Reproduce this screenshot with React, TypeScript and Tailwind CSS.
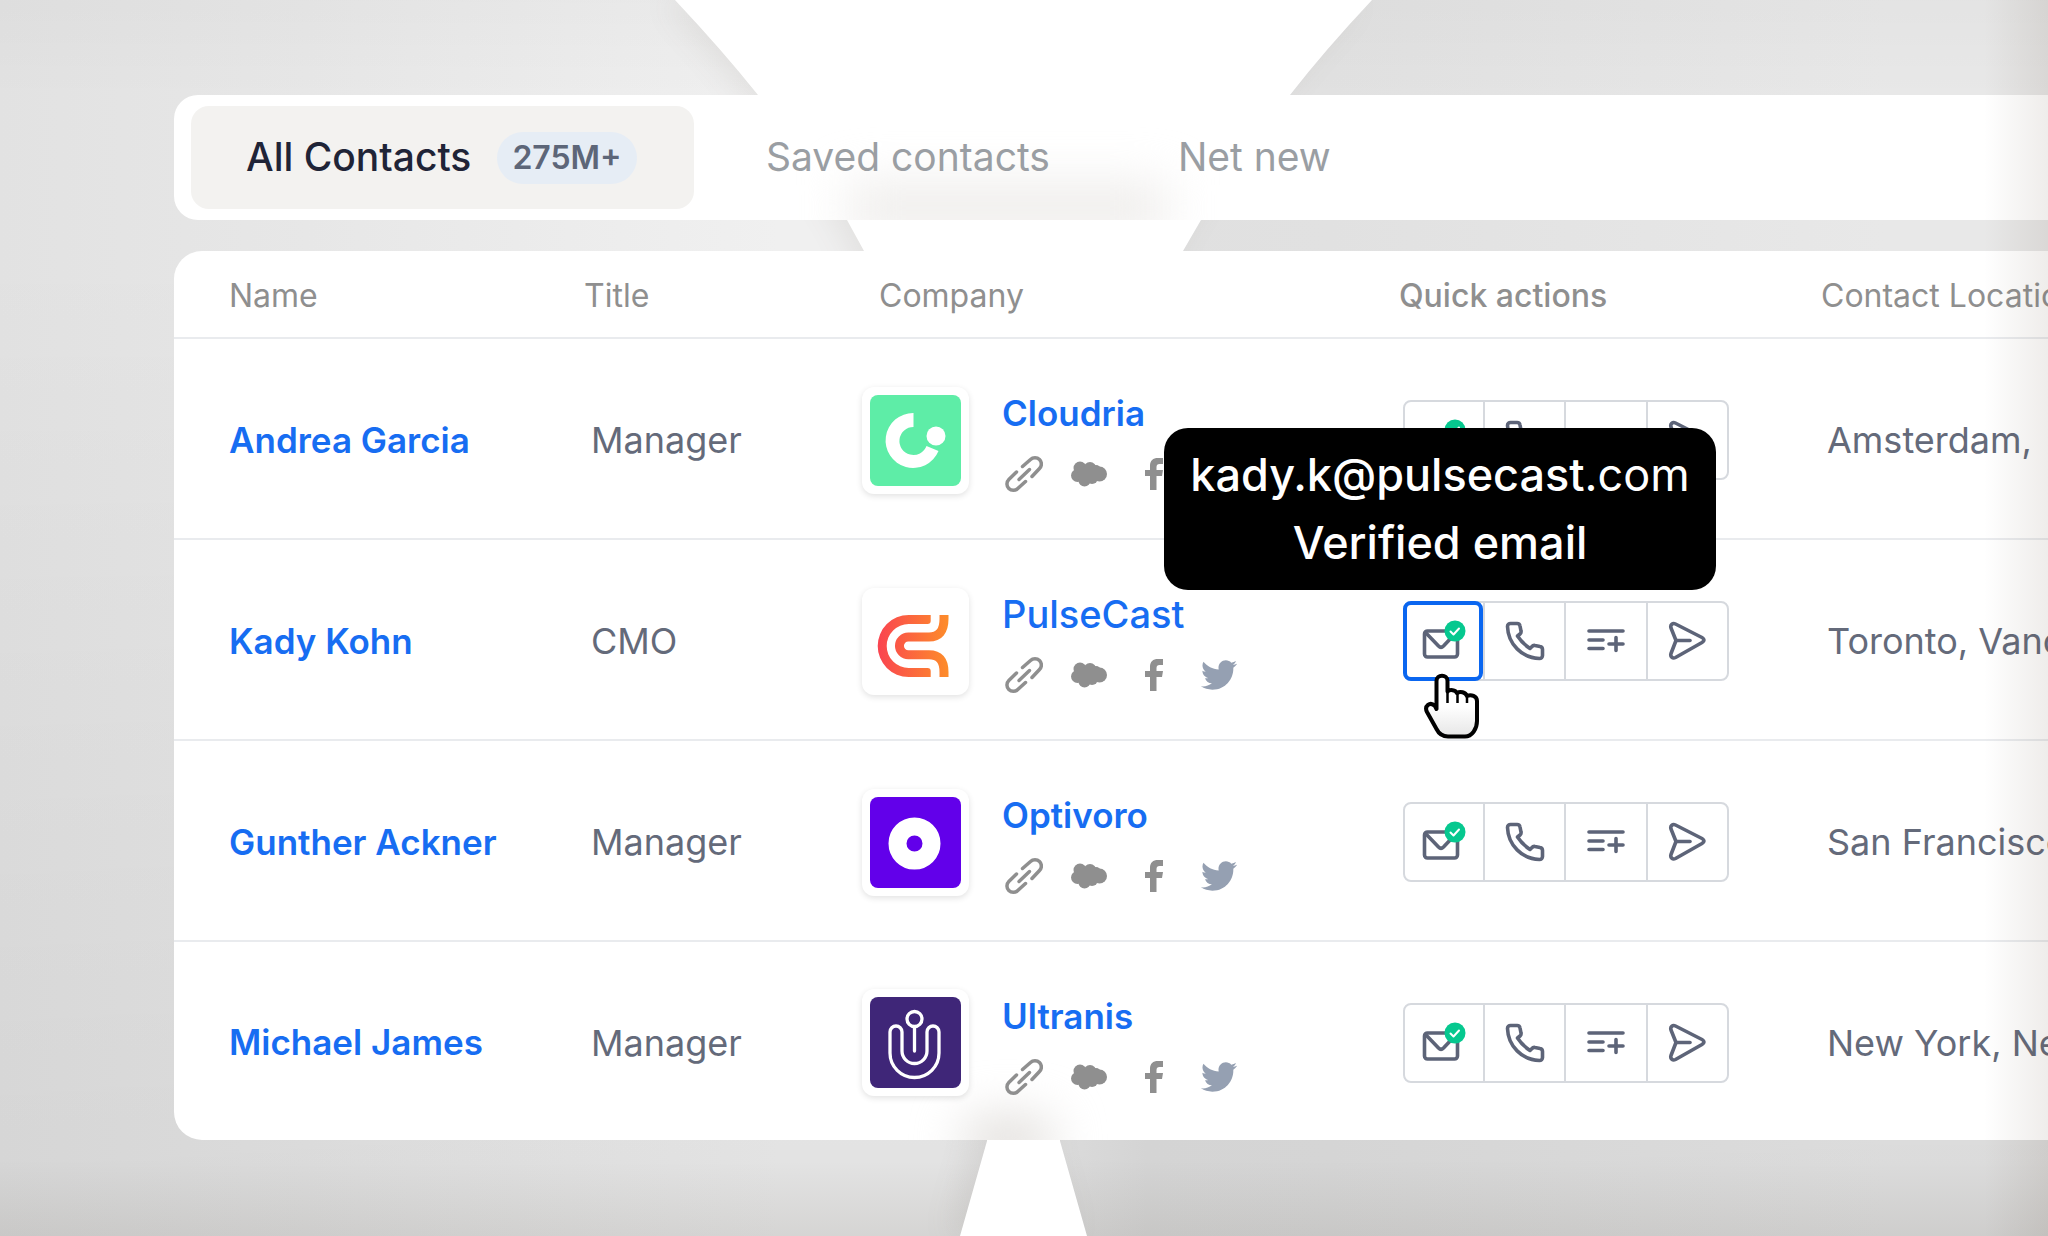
import type { ReactNode } from 'react';

type Contact = {
  name: string;
  title: string;
  company: string;
  location: string;
  logo: ReactNode;
  active?: boolean;
};

function CloudriaLogo() {
  return (
    <svg viewBox="0 0 91 91" className="size-[91px] rounded-lg bg-[#5eeda7]" aria-hidden="true">
      <path d="M43.500 18A27.500 27.500 0 1 0 68.500 56L56.500 51A14 14 0 1 1 43.500 32Z" fill="#fff" />
      <circle cx="66" cy="41" r="9.500" fill="#fff" />
    </svg>
  );
}

function PulseCastLogo() {
  return (
    <svg viewBox="0 0 91 91" className="size-[91px]" aria-hidden="true">
      <defs>
        <linearGradient id="pulse" gradientUnits="userSpaceOnUse" x1="8" y1="50" x2="79" y2="50">
          <stop offset="0" stopColor="#fa4450" />
          <stop offset="1" stopColor="#fd8d2a" />
        </linearGradient>
      </defs>
      <path
        d="M60.700 19H38.700A31 31 0 0 0 38.700 81H60.700V75Q60.700 72 57.500 72H38.700A22 22 0 0 1 38.700 28H57.500Q60.700 28 60.700 25Z"
        fill="url(#pulse)"
      />
      <path
        d="M74 19V23Q74 41 59 41H38.300A8.850 8.850 0 0 0 38.300 58.700H59Q74 58.700 74 76V81"
        fill="none" stroke="url(#pulse)" strokeWidth="9"
      />
    </svg>
  );
}

function OptivoroLogo() {
  return (
    <svg viewBox="0 0 91 91" className="size-[91px] rounded-lg bg-[#6200ea]" aria-hidden="true">
      <circle cx="44.500" cy="46.500" r="17" fill="none" stroke="#fff" strokeWidth="18" />
    </svg>
  );
}

function UltranisLogo() {
  return (
    <svg viewBox="0 0 91 91" className="size-[91px] rounded-lg bg-[#3f2678]" aria-hidden="true">
      <g fill="none" stroke="#fff" strokeWidth="3.300" strokeLinecap="round">
        <circle cx="44.500" cy="22" r="7.500" />
        <path d="M44.500 30V54" />
        <path d="M20 35a6 6 0 0 1 12 0v19a12.500 12.500 0 0 0 25 0V35a6 6 0 0 1 12 0v21a24.500 24.500 0 0 1-49 0Z" />
      </g>
    </svg>
  );
}

function LinkIcon() {
  return (
    <svg viewBox="0 0 38 38" className="size-[38px]" fill="none" stroke="currentColor" strokeWidth="3.500" strokeLinecap="round" aria-hidden="true">
      <path d="M17.500 11.500L25.500 4.500A6.200 6.200 0 0 1 34.500 13.500L27 21.500" />
      <path d="M11.500 17L3.800 24.500A6.200 6.200 0 0 0 12.800 33.500L20.500 26.500" />
      <path d="M14 24.500L24.500 14.500" />
    </svg>
  );
}

function SalesforceIcon() {
  return (
    <svg viewBox="0 0 36 26" className="h-[26px] w-9" fill="currentColor" aria-hidden="true">
      <circle cx="9" cy="7" r="6.500" />
      <circle cx="19" cy="7.500" r="6.500" />
      <circle cx="6.500" cy="14.500" r="6.500" />
      <circle cx="13.500" cy="19.500" r="6" />
      <circle cx="21" cy="17" r="6" />
      <circle cx="25" cy="9" r="5" />
      <circle cx="28.500" cy="13" r="7.500" />
      <path d="M6 6H27V20H8Z" />
    </svg>
  );
}

function FacebookIcon() {
  return (
    <svg viewBox="0 0 20 34" className="h-[34px] w-5" fill="currentColor" aria-hidden="true">
      <path d="M6 33V19H1V13H6V9C6 3.500 9 1 14 1H19V7H15.500C13.500 7 12.500 8 12.500 10V13H19L18 19H12.500V33Z" />
    </svg>
  );
}

function TwitterIcon() {
  return (
    <svg viewBox="0 0 24 24" className="size-9" fill="currentColor" aria-hidden="true">
      <path d="M23.954 4.569c-.885.389-1.830.654-2.825.775 1.014-.611 1.794-1.574 2.163-2.723-.951.555-2.005.959-3.127 1.184-.896-.959-2.173-1.559-3.591-1.559-2.717 0-4.920 2.203-4.920 4.917 0 .390.045.765.127 1.124C7.691 8.094 4.066 6.130 1.640 3.161c-.427.722-.666 1.561-.666 2.475 0 1.710.870 3.213 2.188 4.096-.807-.026-1.566-.248-2.228-.616v.061c0 2.385 1.693 4.374 3.946 4.827-.413.111-.849.171-1.296.171-.314 0-.615-.030-.916-.086.631 1.953 2.445 3.377 4.604 3.417-1.680 1.319-3.809 2.105-6.102 2.105-.390 0-.779-.023-1.170-.067 2.189 1.394 4.768 2.209 7.557 2.209 9.054 0 13.999-7.496 13.999-13.986 0-.209 0-.420-.015-.630.961-.689 1.800-1.560 2.460-2.548z" />
    </svg>
  );
}

const iconStroke = {
  fill: 'none',
  stroke: 'currentColor',
  strokeWidth: 3.6,
  strokeLinecap: 'round' as const,
  strokeLinejoin: 'round' as const,
  'aria-hidden': true,
};

function MailIcon() {
  return (
    <svg viewBox="0 0 50 44" className="h-11 w-[50px]" {...iconStroke}>
      <rect x="5.500" y="12" width="33" height="26" rx="3" />
      <path d="M7.500 14.500L19.500 27Q22 29.500 24.500 27L34 17" />
      <circle cx="36" cy="12" r="10.500" fill="#06c88f" stroke="none" />
      <path d="M31.500 12.500L34.500 15.500L40 9.500" stroke="#fff" strokeWidth="2" />
    </svg>
  );
}

function PhoneIcon() {
  return (
    <svg viewBox="0 0 40 40" className="size-10" {...iconStroke}>
      <path d="M5.500 2.500H12A3 3 0 0 1 15 5L16 10A3 3 0 0 1 15 13L12.500 15Q17 22 25 27.500L27 25.500A3 3 0 0 1 30 24.500L35 25.500A3 3 0 0 1 37.500 28.500V34.500A3 3 0 0 1 34.500 37.500C17 37 3 23 2.500 5.500A3 3 0 0 1 5.500 2.500Z" />
    </svg>
  );
}

function ListAddIcon() {
  return (
    <svg viewBox="0 0 40 26" className="h-[26px] w-10" {...iconStroke}>
      <path d="M3 3H37M3 12H17M3 20.500H17M23 16H37M30 9.500V22.500" />
    </svg>
  );
}

function SendIcon() {
  return (
    <svg viewBox="0 0 40 40" className="size-10" {...iconStroke}>
      <path d="M4 7C3 4 5.500 1.500 8.500 3L35 16.500Q39 19 35 21.500L8.500 36.500C5.500 38 3 35.500 4 32.500L9 19.500Z" />
      <path d="M9 19.500H23" />
    </svg>
  );
}

function PointerHand() {
  return (
    <svg viewBox="0 0 56 66" className="h-[66px] w-14" aria-hidden="true">
      <defs>
        <linearGradient id="hand" x1="0" y1="0" x2="0" y2="1">
          <stop offset="0.500" stopColor="#fff" />
          <stop offset="1" stopColor="#e6e6e6" />
        </linearGradient>
      </defs>
      <path
        d="M12.500 36V8C12.500 1 23.500 1 23.500 8V18.500C26 16 31.500 17 33 20C36 18 41.500 19 43 23C47 21 53 23 53 28V48C53 56 48 63.500 41 63.500H24C19 63.500 15 61 12.500 56L3 39C0 33 6 28 11 33Z"
        fill="url(#hand)" stroke="#000" strokeWidth="4" strokeLinejoin="round"
      />
      <path d="M23.500 18V30M33.500 20V30M43 23V30" stroke="#000" strokeWidth="2.500" fill="none" />
    </svg>
  );
}

function Backdrop() {
  const shape =
    'M675 0Q722 50 758 95Q812 160 847 220L864 251Q960 500 1000 1000L987 1141L960 1236H1087L1060 1141Q1060 600 1183 251L1201 220Q1240 150 1290 95Q1325 50 1372 0Z';
  return (
    <div className="absolute inset-0 -z-10 bg-[linear-gradient(90deg,#e2e2e2_0%,#e7e7e7_15%,#f0f0f0_38%,#f0f0f0_46%,#e0e0e0_56%,#e1e1e1_65%,#e8e8e8_92%)]">
      <div className="absolute inset-0 bg-[linear-gradient(180deg,rgba(0,0,0,0.02)_0%,rgba(0,0,0,0)_8%,rgba(0,0,0,0)_20%,rgba(0,0,0,0.055)_94%,rgba(20,15,5,0.12)_100%)]" />
      <svg viewBox="0 0 2048 1236" preserveAspectRatio="none" className="absolute inset-0 size-full" aria-hidden="true">
        <defs>
          <filter id="soft">
            <feGaussianBlur stdDeviation="16" />
          </filter>
        </defs>
        <path d={shape} transform="translate(-12 0)" fill="#5a5045" opacity="0.09" filter="url(#soft)" />
        <path d={shape} fill="#fff" />
      </svg>
    </div>
  );
}

const contacts: Contact[] = [
  { name: 'Andrea Garcia', title: 'Manager', company: 'Cloudria', location: 'Amsterdam,', logo: <CloudriaLogo /> },
  { name: 'Kady Kohn', title: 'CMO', company: 'PulseCast', location: 'Toronto, Vancouver', logo: <PulseCastLogo />, active: true },
  { name: 'Gunther Ackner', title: 'Manager', company: 'Optivoro', location: 'San Francisco', logo: <OptivoroLogo /> },
  { name: 'Michael James', title: 'Manager', company: 'Ultranis', location: 'New York, New York', logo: <UltranisLogo /> },
];

const actions = [
  { label: 'Call', icon: <PhoneIcon /> },
  { label: 'Add to list', icon: <ListAddIcon /> },
  { label: 'Send sequence', icon: <SendIcon /> },
];

function QuickActions({ active }: { active?: boolean }) {
  return (
    <div className="relative w-[326px]">
      <div className="flex h-20 rounded-lg border-2 border-[#d6d9de] text-[#5d6478]">
        <button type="button" aria-label="Email" className="flex w-[78px] items-center justify-center">
          <MailIcon />
        </button>
        {actions.map((a) => (
          <button key={a.label} type="button" aria-label={a.label} className="flex flex-1 items-center justify-center border-l-2 border-[#d6d9de]">
            {a.icon}
          </button>
        ))}
      </div>
      {active && (
        <>
          <div className="pointer-events-none absolute inset-y-0 left-0 w-20 rounded-lg border-4 border-[#0a66f0]" />
          <div role="tooltip" className="absolute bottom-[91px] left-[-239px] w-[552px] rounded-3xl bg-black py-[13px] text-center text-[45px] leading-[68px] font-medium whitespace-nowrap text-white">
            <div>kady.k@pulsecast<span className="font-normal">.com</span></div>
            <div>Verified email</div>
          </div>
          <div className="pointer-events-none absolute top-[72px] left-[21px]">
            <PointerHand />
          </div>
        </>
      )}
    </div>
  );
}

function ContactRow({ c }: { c: Contact }) {
  return (
    <tr className="h-[201px] border-t-2 border-[#e9ebee] text-4xl text-[#646a7a] last:h-[199px]">
      <td className="pt-[3px] pl-[55px] text-[35px] font-semibold">
        <a href="#" className="text-[#176df2]">{c.name}</a>
      </td>
      <td className="pt-[3px] pl-[7px]">{c.title}</td>
      <td className="pt-[3px]">
        <div className="flex items-center gap-[33px]">
          <div className="rounded-xl bg-white p-2 shadow-[0_2px_6px_rgba(0,0,0,0.12)]">{c.logo}</div>
          <div className="flex flex-col gap-5 pt-1">
            <a href="#" className={c.active ? 'text-[38px] leading-[44px] font-medium text-[#176df2]' : 'text-[35px] leading-[44px] font-semibold text-[#176df2]'}>{c.company}</a>
            <div className="flex h-[38px] items-center pl-[3px] text-[#8f8f8f]">
              <a href="#" aria-label="Website" className="w-[66px]"><LinkIcon /></a>
              <a href="#" aria-label="Salesforce" className="w-[73px]"><SalesforceIcon /></a>
              <a href="#" aria-label="Facebook" className="w-[57px]"><FacebookIcon /></a>
              <a href="#" aria-label="Twitter" className="text-[#95a0b2]"><TwitterIcon /></a>
            </div>
          </div>
        </div>
      </td>
      <td className="pt-[3px]"><QuickActions active={c.active} /></td>
      <td className="pt-[3px] pl-1.5 whitespace-nowrap">{c.location}</td>
    </tr>
  );
}

export default function App() {
  return (
    <div className="relative isolate min-h-screen overflow-hidden pt-[95px] pb-[90px] pl-[174px] font-['Inter',sans-serif]">
      <Backdrop />

      <nav className="relative isolate flex h-[125px] items-center overflow-hidden rounded-l-3xl bg-white pl-[17px] text-[39px] whitespace-nowrap">
        <div className="absolute -bottom-3 left-[36%] -z-10 h-12 w-[17%] bg-[#eeecea] blur-xl" />
        <button type="button" className="flex h-[103px] w-[503px] shrink-0 items-center gap-[26px] rounded-[18px] bg-[#f3f2f0] pl-[55px] font-medium text-[#1f2437]">
          All Contacts
          <span className="rounded-full bg-[#e6edf5] px-[15px] text-[32px] leading-[52px] font-semibold text-[#5d6678]">275M+</span>
        </button>
        <button type="button" className="ml-[72px] text-[#9a9ea3]">Saved contacts</button>
        <button type="button" className="ml-32 text-[#9a9ea3]">Net new</button>
      </nav>

      <div className="relative isolate mt-[31px] overflow-hidden rounded-l-[28px] bg-white">
        <div className="absolute -bottom-6 left-[42%] -z-10 h-12 w-[5%] rounded-full bg-[#e2dfdc] blur-xl" />
        <table className="w-full min-w-[1874px] table-fixed border-collapse text-left">
          <thead>
            <tr className="h-[87px] text-[32px] text-[#8f8f8f]">
              <th className="w-[410px] pt-1 pl-[55px] font-normal">Name</th>
              <th className="w-[278px] pt-1 font-normal">Title</th>
              <th className="w-[541px] pt-1 pl-[17px] font-normal">Company</th>
              <th className="w-[418px] pt-1 font-medium">
                <span className="-ml-1">Quick actions</span>
              </th>
              <th className="pt-1 font-normal whitespace-nowrap">Contact Location</th>
            </tr>
          </thead>
          <tbody>
            {contacts.map((c) => <ContactRow key={c.name} c={c} />)}
          </tbody>
        </table>
      </div>

      <div className="pointer-events-none absolute inset-y-0 right-0 w-16 bg-linear-to-r from-[#5a4632]/0 to-[#5a4632]/10" />
    </div>
  );
}
